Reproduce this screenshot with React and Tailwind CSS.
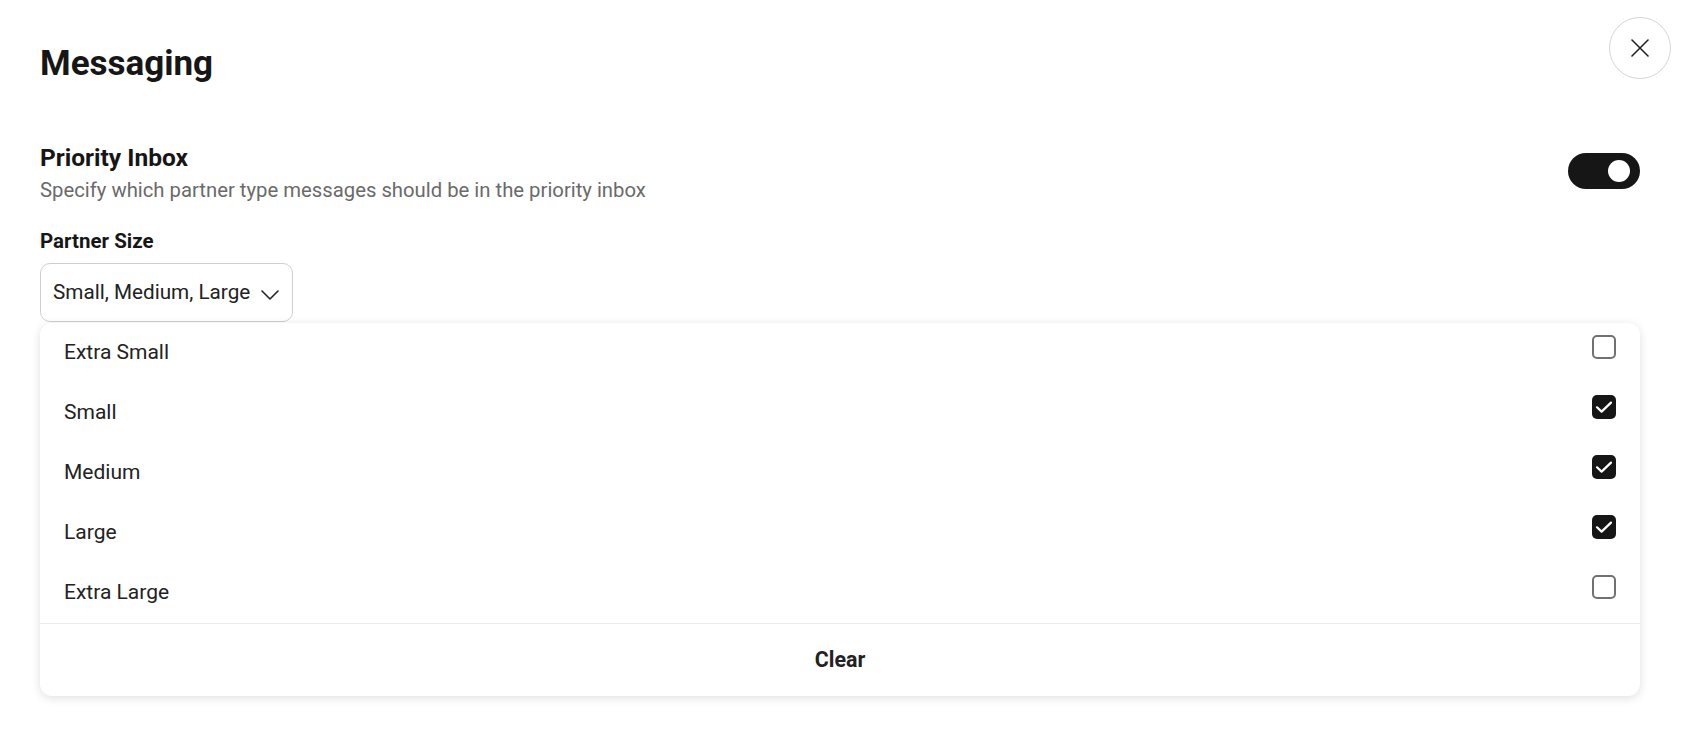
import React from "react";

const items = [
  { label: "Extra Small", checked: false },
  { label: "Small", checked: true },
  { label: "Medium", checked: true },
  { label: "Large", checked: true },
  { label: "Extra Large", checked: false },
];

function Checkbox({ checked }) {
  if (checked) {
    return (
      <div className="w-6 h-6 rounded-[5px] bg-[#161616] flex items-center justify-center mb-3">
        <svg width="24" height="24" viewBox="0 0 24 24" fill="none">
          <path d="M5 12.3L9.6 16.6L19 7.6" stroke="white" strokeWidth="2.2" strokeLinecap="round" strokeLinejoin="round" />
        </svg>
      </div>
    );
  }
  return <div className="w-6 h-6 rounded-[5px] border-2 border-[#717171] mb-3" />;
}

export default function App() {
  return (
    <div className="relative w-full h-[746px] bg-white font-['Roboto',sans-serif] text-[#161616] overflow-hidden">
      <button className="absolute top-[17px] right-[13px] w-[62px] h-[62px] rounded-full border border-[#d6d6d6] bg-white flex items-center justify-center">
        <svg width="18" height="18" viewBox="0 0 18 18" fill="none">
          <path d="M1 1L17 17M17 1L1 17" stroke="#222222" strokeWidth="1.6" strokeLinecap="round" />
        </svg>
      </button>

      <div className="pl-10 pr-[44px] pt-[44px]">
        <h1 className="text-[35px] leading-[40px] font-bold">Messaging</h1>

        <div className="mt-[60px] flex items-center justify-between">
          <div>
            <div className="text-[24.5px] leading-[28px] font-bold">Priority Inbox</div>
            <div className="mt-[5px] text-[20.3px] leading-[26px] text-[#6a6a6a]">
              Specify which partner type messages should be in the priority inbox
            </div>
          </div>
          <div className="w-[72px] h-9 rounded-full bg-[#161616] flex items-center justify-end pr-[10px] -mt-[5px]">
            <div className="w-[22px] h-[22px] rounded-full bg-white" />
          </div>
        </div>

        <div className="mt-[26px] text-[20.5px] leading-[24px] font-bold">Partner Size</div>

        <div className="relative mt-[10px] w-[253px]">
          <div className="h-[59px] border border-[#cfcfcf] rounded-[10px] pl-3 pr-[13px] flex items-center justify-between text-[20.7px] text-[#222222]">
            <span>Small, Medium, Large</span>
            <svg width="18" height="10" viewBox="0 0 18 10" fill="none" className="mt-1">
              <path d="M1 1L9 9L17 1" stroke="#222222" strokeWidth="1.6" strokeLinecap="round" strokeLinejoin="round" />
            </svg>
          </div>

          <div className="absolute top-[60px] left-0 w-[1600px] bg-white rounded-[12px] shadow-[0_2px_10px_rgba(0,0,0,0.13)]">
            {items.map((it) => (
              <div key={it.label} className="h-[60px] flex items-center justify-between px-6">
                <span className="text-[21px] text-[#222222]">{it.label}</span>
                <Checkbox checked={it.checked} />
              </div>
            ))}
            <div className="h-[73px] border-t border-[#ebebeb] flex items-center justify-center">
              <span className="text-[21.4px] font-bold text-[#222222]">Clear</span>
            </div>
          </div>
        </div>
      </div>
    </div>
  );
}
